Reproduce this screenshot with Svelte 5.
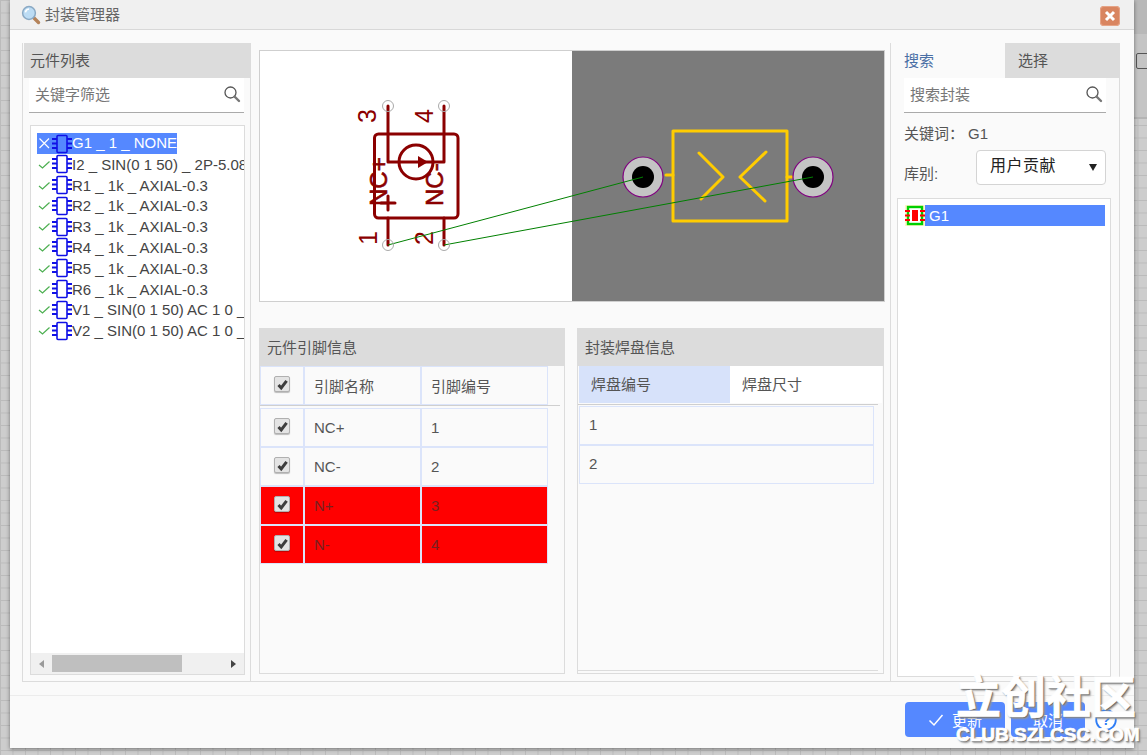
<script>
	const parts = [
		{ name: 'G1 _ 1 _ NONE', bad: true },
		{ name: 'I2 _ SIN(0 1 50) _ 2P-5.08' },
		{ name: 'R1 _ 1k _ AXIAL-0.3' },
		{ name: 'R2 _ 1k _ AXIAL-0.3' },
		{ name: 'R3 _ 1k _ AXIAL-0.3' },
		{ name: 'R4 _ 1k _ AXIAL-0.3' },
		{ name: 'R5 _ 1k _ AXIAL-0.3' },
		{ name: 'R6 _ 1k _ AXIAL-0.3' },
		{ name: 'V1 _ SIN(0 1 50) AC 1 0 _' },
		{ name: 'V2 _ SIN(0 1 50) AC 1 0 _' }
	];
	const pins = [
		{ name: 'NC+', num: '1' },
		{ name: 'NC-', num: '2' },
		{ name: 'N+', num: '3', missing: true },
		{ name: 'N-', num: '4', missing: true }
	];
</script>

{#snippet searchIcon()}
	<svg class="search-icon" width="18" height="18" viewBox="0 0 18 18">
		<circle cx="7.5" cy="7.5" r="5.5" fill="none" stroke="#555" stroke-width="1.3" />
		<path d="M11.5 11.5 L16 16" stroke="#777" stroke-width="2.4" stroke-linecap="round" />
	</svg>
{/snippet}

{#snippet checkbox()}
	<span class="check">
		<svg width="13" height="13" viewBox="0 0 13 13">
			<path d="M2.5 7 L5.2 10 L10.6 2.8" fill="none" stroke="#3d3d3d" stroke-width="3" />
		</svg>
	</span>
{/snippet}

<div class="side"><span class="side-top"></span><span class="side-box"></span></div>

<div class="dialog">
	<div class="titlebar">
		<svg class="title-icon" width="20" height="20" viewBox="0 0 20 20">
			<path d="M12 12 L17.5 17.5" stroke="#b5835a" stroke-width="3.4" stroke-linecap="round" />
			<circle cx="8" cy="8" r="6.4" fill="#bcdcf4" stroke="#8aa9c4" stroke-width="1.5" />
			<path d="M4.4 7.4 A4 4 0 0 1 8 4" fill="none" stroke="#fff" stroke-width="1.6" />
		</svg>
		<span class="title">封装管理器</span>
		<span class="close">
			<svg width="12" height="12" viewBox="0 0 12 12">
				<path d="M2 2 L10 10 M10 2 L2 10" stroke="#fff" stroke-width="3" />
			</svg>
		</span>
	</div>

	<div class="main">
		<section class="left">
			<h3 class="head">元件列表</h3>
			<div class="search">
				<span>关键字筛选</span>
				{@render searchIcon()}
			</div>
			<div class="part-box">
				<ul class="parts">
					{#each parts as p}
						<li>
							<span class="part" class:bad={p.bad}>
								{#if p.bad}
									<svg class="mark" width="15" height="15" viewBox="0 0 15 15">
										<path d="M2.5 2.5 L12 12 M12 2.5 L2.5 12" stroke="#fff" stroke-width="1.2" />
									</svg>
								{:else}
									<svg class="mark" width="15" height="15" viewBox="0 0 15 15">
										<path d="M2 8 L5.5 11 L12.5 4.5" fill="none" stroke="#4caf50" stroke-width="1.2" />
									</svg>
								{/if}
								<svg class="chip" width="20" height="20" viewBox="0 0 20 20">
									<rect x="5" y="1.5" width="10" height="17" rx="1" fill="none" stroke="#1010e6" stroke-width="1.6" />
									<path d="M0 5 H5 M0 9.5 H5 M0 14 H5 M15 5 H20 M15 9.5 H20 M15 14 H20" stroke="#1010e6" stroke-width="1.8" />
								</svg>
								<span class="part-name">{p.name}</span>
							</span>
						</li>
					{/each}
				</ul>
				<div class="hscroll">
					<i class="arrow off-left"></i>
					<div class="track"><div class="thumb"></div></div>
					<i class="arrow on-right"></i>
				</div>
			</div>
		</section>

		<section class="center">
			<div class="preview">
				<svg width="624" height="250" viewBox="260 51 624 250">
					<rect x="572" y="51" width="312" height="250" fill="#7b7b7b" />
					<g fill="none" stroke="#8b0000" stroke-width="3" stroke-linecap="round" stroke-linejoin="round">
						<rect x="374.5" y="134" width="83.5" height="84" rx="4" />
						<path d="M388 106 V162 H444 V106 M388 218 V245 M444 218 V245" />
						<circle cx="416" cy="162" r="17" />
						<path d="M381 203 H395 M388 196 V210" />
					</g>
					<path d="M418 156 L428 162 L418 168 Z" fill="#8b0000" />
					<g fill="#8b0000" font-family="Liberation Sans, sans-serif">
						<text transform="translate(376 123) rotate(-90)" font-size="25">3</text>
						<text transform="translate(433 123) rotate(-90)" font-size="25">4</text>
						<text transform="translate(377 245) rotate(-90)" font-size="25">1</text>
						<text transform="translate(433 245) rotate(-90)" font-size="25">2</text>
						<text transform="translate(387 206) rotate(-90)" font-size="24" stroke="#8b0000" stroke-width="0.6">NC+</text>
						<text transform="translate(443 206) rotate(-90)" font-size="24" stroke="#8b0000" stroke-width="0.6">NC-</text>
					</g>
					<g fill="none" stroke="#ffcc00" stroke-width="3" stroke-linecap="round" stroke-linejoin="round">
						<rect x="673" y="131" width="114" height="90" />
						<path d="M699 153 L723 177 L701 199 M766 152 L740 177 L765 201" />
						<path d="M666 175 H673 M787 177 H792" />
					</g>
					{#each [643, 813] as x}
						<circle cx={x} cy="177" r="20" fill="#c4c4c4" stroke="#800080" stroke-width="1.2" />
						<circle cx={x} cy="177" r="11" fill="#000" />
					{/each}
					<g stroke="#008000" stroke-width="1">
						<line x1="388" y1="245" x2="643" y2="177" />
						<line x1="444" y1="245" x2="813" y2="177" />
					</g>
					{#each [[388, 106], [444, 106], [388, 245], [444, 245]] as [x, y]}
						<circle cx={x} cy={y} r="5.5" fill="none" stroke="#aaa" />
					{/each}
				</svg>
			</div>

			<div class="tables">
				<div class="panel">
					<h3 class="head">元件引脚信息</h3>
					<div class="pin-row pin-head">
						<div class="cell mid">{@render checkbox()}</div>
						<div class="cell">引脚名称</div>
						<div class="cell">引脚编号</div>
					</div>
					<div class="pin-rule"></div>
					{#each pins as pin}
						<div class="pin-row" class:missing={pin.missing}>
							<div class="cell mid">{@render checkbox()}</div>
							<div class="cell">{pin.name}</div>
							<div class="cell">{pin.num}</div>
						</div>
					{/each}
				</div>

				<div class="panel pads">
					<h3 class="head">封装焊盘信息</h3>
					<div class="pad-tabs">
						<div class="pad-tab on">焊盘编号</div>
						<div class="pad-tab">焊盘尺寸</div>
					</div>
					<div class="pin-rule pad-rule"></div>
					<div class="pad-row">1</div>
					<div class="pad-row">2</div>
					<div class="pad-foot"></div>
				</div>
			</div>
		</section>

		<section class="right">
			<div class="tabs">
				<div class="tab on">搜索</div>
				<div class="tab">选择</div>
			</div>
			<div class="search">
				<span>搜索封装</span>
				{@render searchIcon()}
			</div>
			<div class="keyword"><span>关键词：</span><span>G1</span></div>
			<div class="lib">
				<span>库别:</span>
				<div class="select"><span>用户贡献</span><i class="caret"></i></div>
			</div>
			<div class="fp-box">
				<div class="fp">
					<svg width="20" height="21" viewBox="0 0 20 21">
						<rect x="0" y="0" width="20" height="21" fill="#fff6c8" />
						<rect x="3" y="2" width="14" height="17" fill="#fff" stroke="#00d000" stroke-width="2.4" />
						<path d="M0 6 H5 M0 10.5 H5 M0 15 H5 M15 6 H20 M15 10.5 H20 M15 15 H20" stroke="#f00" stroke-width="2.2" />
						<rect x="7" y="5" width="6" height="11" fill="#f00" />
					</svg>
					<span>G1</span>
				</div>
			</div>
		</section>
	</div>

	<div class="foot">
		<button class="btn wide">
			<svg width="16" height="14" viewBox="0 0 16 14">
				<path d="M1.5 7.5 L6 12 L14.5 2" fill="none" stroke="#fff" stroke-width="1.5" />
			</svg>
			更新
		</button>
		<button class="btn">取消</button>
		<svg class="help" width="22" height="22" viewBox="0 0 22 22">
			<circle cx="11" cy="11" r="9.8" fill="#fff" stroke="#2f7df6" stroke-width="1.8" />
			<text x="11" y="16" text-anchor="middle" font-size="14" font-weight="700" fill="#2f7df6" font-family="Liberation Sans, sans-serif">?</text>
		</svg>
	</div>
</div>

<div class="watermark">
	<div class="wm-cn">立创社区</div>
	<div class="wm-en">CLUB.SZLCSC.COM</div>
</div>

<style>
	:global(body) {
		margin: 0;
		height: 755px;
		overflow: hidden;
		background-color: #cdcdcd;
		background-image:
			linear-gradient(#bbb 1px, transparent 1px),
			linear-gradient(90deg, #bbb 1px, transparent 1px);
		background-size: 12.5px 12.5px;
		font-family: 'Liberation Sans', 'Noto Sans CJK SC', sans-serif;
		font-size: 15px;
		color: #555;
	}

	.side {
		position: absolute;
		left: 1134px;
		top: 0;
		width: 13px;
		height: 117px;
		background: #c4c4c4;
		border-bottom: 2px solid #b4b4b4;
	}

	.side-top {
		position: absolute;
		left: 0;
		top: 0;
		width: 13px;
		height: 34px;
		background: #b8b8b8;
	}

	.side-box {
		position: absolute;
		left: 2px;
		top: 53px;
		width: 16px;
		height: 14px;
		border: 1px solid #555;
		border-radius: 2px;
	}

	.dialog {
		position: relative;
		box-sizing: border-box;
		width: 1124px;
		height: 748px;
		margin-left: 10px;
		background: #fafafa;
		box-shadow: 0 1px 4px rgba(0, 0, 0, 0.45);
		display: flex;
		flex-direction: column;
	}

	.titlebar {
		box-sizing: border-box;
		height: 30px;
		flex: none;
		display: flex;
		align-items: center;
		padding: 0 14px 0 11px;
		background: #f0f0f0;
		border-bottom: 1px solid #d8d8d8;
	}

	.title-icon {
		margin-right: 4px;
	}

	.title {
		flex: 1;
		color: #666;
		margin-top: -2px;
	}

	.close {
		width: 20px;
		height: 20px;
		margin-top: 2px;
		border-radius: 4px;
		background: #d98560;
		display: flex;
		align-items: center;
		justify-content: center;
		box-shadow: inset 0 0 0 1px #e6a487;
	}

	.main {
		box-sizing: border-box;
		flex: none;
		height: 639px;
		margin: 13px 14px 0 12px;
		display: flex;
		border: 1px solid #dcdcdc;
		border-top: none;
	}

	.head {
		margin: 0;
		height: 38px;
		line-height: 40px;
		padding-left: 7px;
		background: #dcdcdc;
		font-size: 15px;
		font-weight: 400;
		color: #555;
	}

	.left {
		box-sizing: border-box;
		width: 228px;
		padding-left: 1px;
		border-right: 1px solid #dcdcdc;
		display: flex;
		flex-direction: column;
	}

	.left .head {
		height: 35px;
		line-height: 35px;
		padding-left: 6px;
	}

	.search {
		box-sizing: border-box;
		height: 35px;
		display: flex;
		align-items: center;
		justify-content: space-between;
		padding: 0 3px 0 6px;
		background: #fff;
		border-bottom: 1px solid #aaa;
		color: #777;
	}

	.search span {
		margin-top: -4px;
	}

	.search-icon {
		margin-top: -2px;
	}

	.left .search {
		margin: 0 6px 0 5px;
	}

	.part-box {
		box-sizing: border-box;
		width: 215px;
		height: 550px;
		margin: 12px 0 0 6px;
		background: #fff;
		border: 1px solid #dcdcdc;
		display: flex;
		flex-direction: column;
		overflow: hidden;
	}

	.parts {
		flex: 1;
		list-style: none;
		margin: 0;
		padding: 7px 0 0 6px;
		overflow: hidden;
	}

	.parts li {
		height: 20.8px;
		white-space: nowrap;
		color: #444;
	}

	.part {
		display: inline-flex;
		align-items: center;
		height: 21px;
	}

	.part.bad {
		background: #5588ff;
		color: #fff;
	}

	.part.bad .part-name {
		margin-top: -3px;
	}

	.mark {
		flex: none;
	}

	.chip {
		flex: none;
	}

	.hscroll {
		height: 21px;
		flex: none;
		background: #f0f0f0;
		display: flex;
		align-items: center;
	}

	.track {
		flex: 1;
		height: 17px;
		margin: 0 16px 0 8px;
	}

	.thumb {
		width: 130px;
		height: 100%;
		background: #bfbfbf;
	}

	.arrow {
		width: 0;
		height: 0;
		border-top: 4.5px solid transparent;
		border-bottom: 4.5px solid transparent;
	}

	.off-left {
		margin-left: 8px;
		border-right: 5px solid #9a9a9a;
	}

	.on-right {
		margin-right: 8px;
		border-left: 5px solid #444;
	}

	.center {
		width: 639px;
		flex: none;
		display: flex;
		flex-direction: column;
		padding-left: 8px;
		box-sizing: border-box;
	}

	.preview {
		box-sizing: border-box;
		width: 626px;
		height: 252px;
		margin-top: 7px;
		background: #fff;
		border: 1px solid #cfcfcf;
	}

	.preview svg {
		display: block;
	}

	.tables {
		display: flex;
		gap: 12px;
		margin-top: 26px;
	}

	.panel {
		box-sizing: border-box;
		width: 306px;
		height: 346px;
		border: 1px solid #dcdcdc;
		border-top: none;
	}

	.panel.pads {
		width: 307px;
	}

	.pin-row {
		display: grid;
		grid-template-columns: 44px 117px 127px;
		width: 288px;
		height: 39px;
	}

	.pin-head {
		height: 39px;
	}

	.pin-rule {
		height: 1px;
		width: 300px;
		margin-bottom: 2px;
		background: #cfcfcf;
	}

	.cell {
		box-sizing: border-box;
		border: 1px solid #dbe4fa;
		display: flex;
		align-items: center;
		padding-left: 9px;
		color: #555;
	}

	.mid {
		padding-left: 0;
		justify-content: center;
	}

	.mid .check {
		margin-top: -3px;
	}

	.missing .cell {
		background: #ff0000;
		border-color: #dbe4fa;
		color: #772020;
	}

	.check {
		box-sizing: border-box;
		width: 16px;
		height: 16px;
		border-radius: 2px;
		background: #e4e4e4;
		border: 1px solid #b0b0b0;
		box-shadow: 0 1px 1px rgba(0, 0, 0, 0.25);
		display: flex;
		align-items: center;
		justify-content: center;
	}

	.pad-tabs {
		display: flex;
		height: 37px;
		margin-left: 1px;
		background: #fff;
		width: 303px;
	}

	.pad-tab {
		width: 152px;
		padding-left: 12px;
		box-sizing: border-box;
		line-height: 37px;
		color: #555;
	}

	.pad-tab.on {
		width: 151px;
		background: #d7e2fa;
	}

	.pad-rule {
		width: 300px;
		margin-top: 1px;
		margin-bottom: 1px;
	}

	.pad-row {
		box-sizing: border-box;
		width: 295px;
		height: 39px;
		line-height: 36px;
		margin-left: 1px;
		padding-left: 9px;
		border: 1px solid #dbe4fa;
		color: #555;
	}

	.pad-foot {
		height: 1px;
		width: 300px;
		margin-top: 186px;
		background: #dcdcdc;
	}

	.right {
		flex: 1;
		display: flex;
		flex-direction: column;
		border-left: 1px solid #dcdcdc;
		min-width: 0;
	}

	.tabs {
		display: flex;
		height: 35px;
		flex: none;
	}

	.tab {
		flex: 1;
		padding-left: 13px;
		line-height: 35px;
		background: #dcdcdc;
		color: #555;
	}

	.tab.on {
		background: #fafafa;
		color: #4a6fa5;
	}

	.right .search {
		margin: 0 13px;
	}

	.keyword {
		display: flex;
		gap: 4px;
		margin: 11px 0 0 13px;
		height: 20px;
		line-height: 20px;
	}

	.lib {
		display: flex;
		justify-content: space-between;
		align-items: flex-end;
		margin: 6px 13px 0 13px;
	}

	.select {
		box-sizing: border-box;
		width: 130px;
		height: 35px;
		border: 1px solid #d4d4d4;
		border-radius: 4px;
		background: #fff;
		display: flex;
		align-items: center;
		justify-content: space-between;
		padding: 0 8px 0 13px;
		color: #222;
		font-size: 16px;
		letter-spacing: 0.5px;
	}

	.select span {
		margin-top: -7px;
	}

	.lib > span {
		line-height: 24px;
		margin-bottom: -1px;
	}

	.caret {
		border-left: 4px solid transparent;
		border-right: 4px solid transparent;
		border-top: 7px solid #222;
	}

	.fp-box {
		box-sizing: border-box;
		width: 214px;
		height: 479px;
		margin: 13px 0 0 6px;
		padding: 6px 5px 0 7px;
		background: #fff;
		border: 1px solid #dcdcdc;
	}

	.fp {
		display: flex;
		align-items: center;
		height: 21px;
		width: 200px;
		background: #5588ff;
		color: #fff;
		gap: 4px;
	}

	.foot {
		flex: none;
		margin-top: 13px;
		border-top: 1px solid #ececec;
		height: 50px;
		display: flex;
		align-items: flex-start;
		justify-content: flex-end;
		padding: 6px 17px 0 0;
		gap: 6px;
		box-sizing: border-box;
	}

	.btn {
		width: 74px;
		height: 35px;
		border: none;
		border-radius: 4px;
		background: #5588ff;
		color: #fff;
		font: inherit;
		display: flex;
		align-items: center;
		justify-content: center;
		gap: 8px;
		padding: 0;
	}

	.btn.wide {
		width: 100px;
	}

	.help {
		margin: 7px 0 0 4px;
	}

	.watermark {
		position: absolute;
		left: 956px;
		top: 666px;
		width: 182px;
		color: #fff;
		font-weight: 700;
		-webkit-text-stroke: 0.7px #fff;
		text-shadow: 1px 1px 1px #666, 2px 2px 2px #999;
		pointer-events: none;
	}

	.wm-cn {
		font-size: 45px;
		line-height: 57px;
		white-space: nowrap;
		font-family: 'Noto Sans CJK SC', sans-serif;
	}

	.wm-en {
		font-size: 19px;
		line-height: 24px;
		white-space: nowrap;
		font-family: 'Liberation Sans', sans-serif;
	}
</style>
